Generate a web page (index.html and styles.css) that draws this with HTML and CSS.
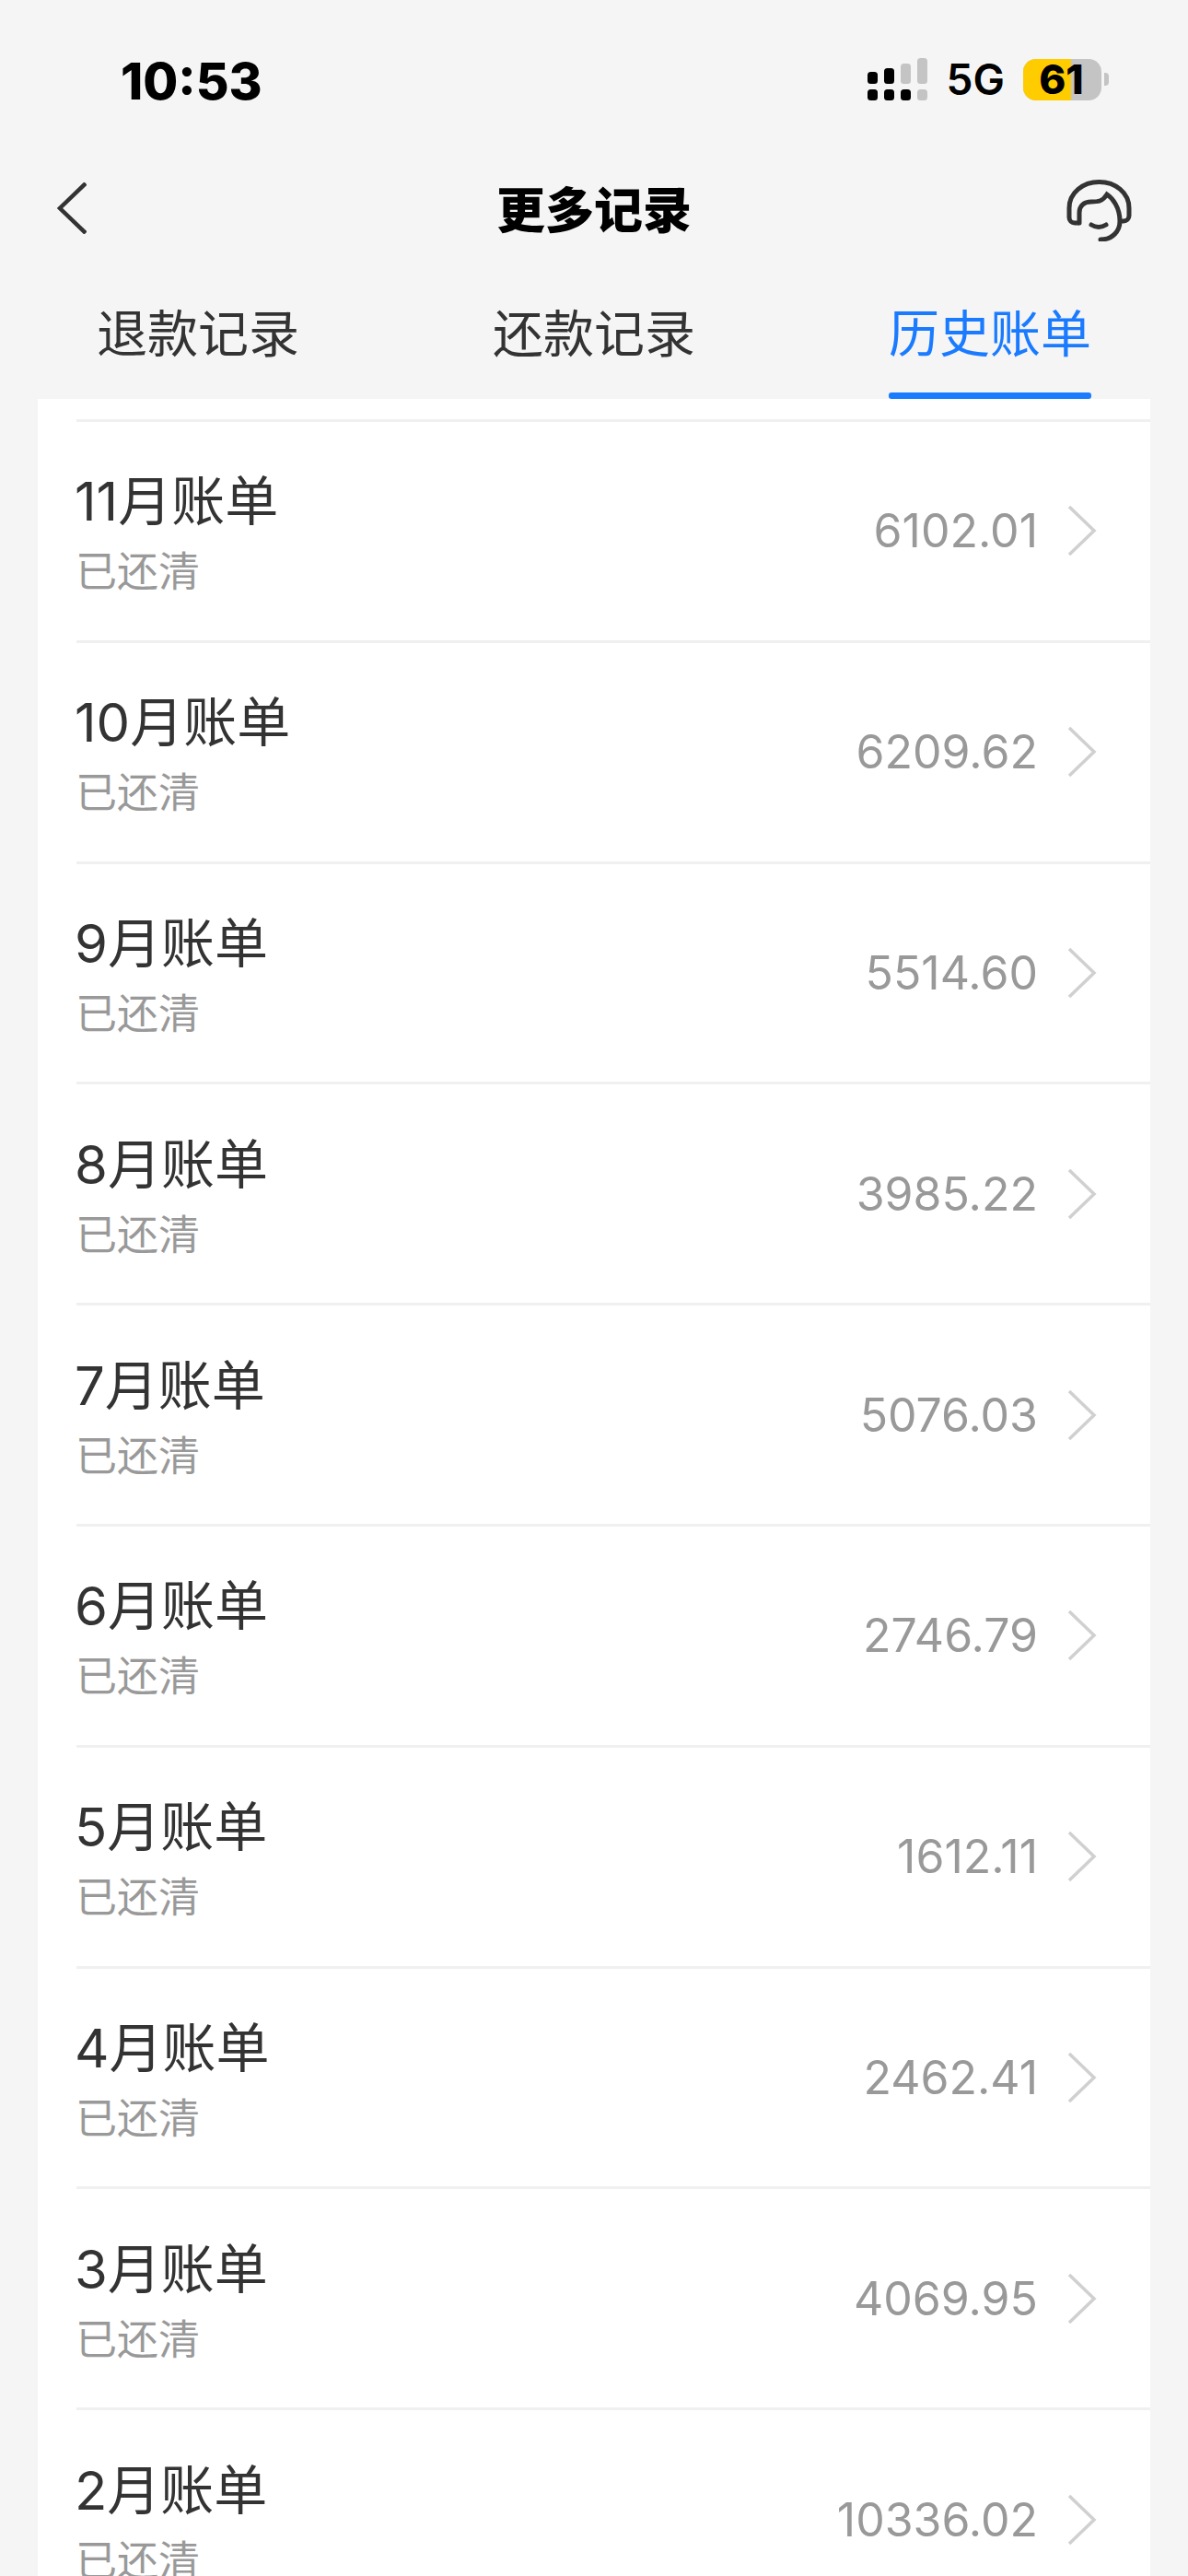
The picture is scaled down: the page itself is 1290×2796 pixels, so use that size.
FILE: index.html
```html
<!DOCTYPE html>
<html lang="zh-CN">
<head>
    <meta charset="UTF-8">
    <meta name="viewport" content="width=device-width, initial-scale=1.0">
    <title>更多记录</title>
    <link rel="stylesheet" href="styles.css">
</head>
<body>

<header class="status">
    <span class="time">10:53</span>
    <div class="status-right">
        <svg class="signal" width="65" height="46" viewBox="0 0 65 46">
            <rect x="0" y="15" width="11" height="13" rx="3.5" fill="#000"/>
            <rect x="18" y="11" width="11" height="17" rx="3.5" fill="#000"/>
            <rect x="36" y="6" width="11" height="22" rx="3.5" fill="#c4c4c4"/>
            <rect x="54" y="0" width="11" height="28" rx="3.5" fill="#c4c4c4"/>
            <rect x="0" y="34" width="11" height="12" rx="3.5" fill="#000"/>
            <rect x="18" y="34" width="11" height="12" rx="3.5" fill="#000"/>
            <rect x="36" y="34" width="11" height="12" rx="3.5" fill="#000"/>
            <rect x="54" y="34" width="11" height="12" rx="3.5" fill="#c4c4c4"/>
        </svg>
        <span class="net">5G</span>
        <div class="battery">
            <div class="battery-body"><div class="battery-fill"></div><span class="battery-num">61</span></div>
            <div class="battery-nub"></div>
        </div>
    </div>
</header>

<nav class="topbar">
    <svg class="back" width="32" height="56" viewBox="0 0 32 56">
        <path d="M31 1 L3 28 L31 55" fill="none" stroke="#333" stroke-width="4.5"/>
    </svg>
    <h1 class="page-title">更多记录</h1>
    <svg class="service" width="72" height="67" viewBox="0 0 72 67">
        <path d="M14 47 H9 a6 6 0 0 1 -6 -6 V31 C3 14 18 2.500 35.500 2.500 S68 14 68 31 V39 a6 6 0 0 1 -6 6 H58" fill="none" stroke="#333" stroke-width="5"/>
        <path d="M14 47 V36 C14 28 19 24 27 24 C34 24 39 24 44 16 C50 20 58 30 58 45 C58 56 50 65 37 65" fill="none" stroke="#333" stroke-width="5" stroke-linecap="round"/>
        <path d="M27 49 Q35 54 43 49" fill="none" stroke="#333" stroke-width="5" stroke-linecap="round"/>
    </svg>
</nav>

<div class="tabs">
    <div class="tab">退款记录</div>
    <div class="tab">还款记录</div>
    <div class="tab active">历史账单</div>
</div>

<main class="panel">
    <ul class="bills">
        <li class="bill">
            <div class="bill-info"><div class="bill-name">11月账单</div><div class="bill-state">已还清</div></div>
            <span class="bill-amount">6102.01</span>
            <svg class="chev" width="32" height="54" viewBox="0 0 32 54"><path d="M2 1 L29 27 L2 53" fill="none" stroke="#d0d0d0" stroke-width="3.500"/></svg>
        </li>
        <li class="bill">
            <div class="bill-info"><div class="bill-name">10月账单</div><div class="bill-state">已还清</div></div>
            <span class="bill-amount">6209.62</span>
            <svg class="chev" width="32" height="54" viewBox="0 0 32 54"><path d="M2 1 L29 27 L2 53" fill="none" stroke="#d0d0d0" stroke-width="3.500"/></svg>
        </li>
        <li class="bill">
            <div class="bill-info"><div class="bill-name">9月账单</div><div class="bill-state">已还清</div></div>
            <span class="bill-amount">5514.60</span>
            <svg class="chev" width="32" height="54" viewBox="0 0 32 54"><path d="M2 1 L29 27 L2 53" fill="none" stroke="#d0d0d0" stroke-width="3.500"/></svg>
        </li>
        <li class="bill">
            <div class="bill-info"><div class="bill-name">8月账单</div><div class="bill-state">已还清</div></div>
            <span class="bill-amount">3985.22</span>
            <svg class="chev" width="32" height="54" viewBox="0 0 32 54"><path d="M2 1 L29 27 L2 53" fill="none" stroke="#d0d0d0" stroke-width="3.500"/></svg>
        </li>
        <li class="bill">
            <div class="bill-info"><div class="bill-name">7月账单</div><div class="bill-state">已还清</div></div>
            <span class="bill-amount">5076.03</span>
            <svg class="chev" width="32" height="54" viewBox="0 0 32 54"><path d="M2 1 L29 27 L2 53" fill="none" stroke="#d0d0d0" stroke-width="3.500"/></svg>
        </li>
        <li class="bill">
            <div class="bill-info"><div class="bill-name">6月账单</div><div class="bill-state">已还清</div></div>
            <span class="bill-amount">2746.79</span>
            <svg class="chev" width="32" height="54" viewBox="0 0 32 54"><path d="M2 1 L29 27 L2 53" fill="none" stroke="#d0d0d0" stroke-width="3.500"/></svg>
        </li>
        <li class="bill">
            <div class="bill-info"><div class="bill-name">5月账单</div><div class="bill-state">已还清</div></div>
            <span class="bill-amount">1612.11</span>
            <svg class="chev" width="32" height="54" viewBox="0 0 32 54"><path d="M2 1 L29 27 L2 53" fill="none" stroke="#d0d0d0" stroke-width="3.500"/></svg>
        </li>
        <li class="bill">
            <div class="bill-info"><div class="bill-name">4月账单</div><div class="bill-state">已还清</div></div>
            <span class="bill-amount">2462.41</span>
            <svg class="chev" width="32" height="54" viewBox="0 0 32 54"><path d="M2 1 L29 27 L2 53" fill="none" stroke="#d0d0d0" stroke-width="3.500"/></svg>
        </li>
        <li class="bill">
            <div class="bill-info"><div class="bill-name">3月账单</div><div class="bill-state">已还清</div></div>
            <span class="bill-amount">4069.95</span>
            <svg class="chev" width="32" height="54" viewBox="0 0 32 54"><path d="M2 1 L29 27 L2 53" fill="none" stroke="#d0d0d0" stroke-width="3.500"/></svg>
        </li>
        <li class="bill">
            <div class="bill-info"><div class="bill-name">2月账单</div><div class="bill-state">已还清</div></div>
            <span class="bill-amount">10336.02</span>
            <svg class="chev" width="32" height="54" viewBox="0 0 32 54"><path d="M2 1 L29 27 L2 53" fill="none" stroke="#d0d0d0" stroke-width="3.500"/></svg>
        </li>
    </ul>
</main>

</body>
</html>
```

FILE: styles.css
```css
html, body {
    height: 2796px;
    overflow: hidden;
}
body {
    margin: 0;
    background-color: #f5f5f5;
    color: #333;
    font-family: Inter, "Noto Sans CJK SC", sans-serif;
}

/* status bar */
.status {
    height: 172px;
    box-sizing: border-box;
    padding: 56px 86px 0 131px;
    display: flex;
    justify-content: space-between;
    align-items: flex-start;
}
.time {
    font-size: 55px;
    font-weight: 800;
    line-height: 64px;
    color: #000;
}
.status-right {
    display: flex;
    align-items: center;
    margin-top: 7px;
}
.signal {
    display: block;
}
.net {
    margin-left: 21px;
    font-size: 46px;
    font-weight: 600;
    line-height: 46px;
    color: #000;
}
.battery {
    margin-left: 20px;
    display: flex;
    align-items: center;
}
.battery-body {
    position: relative;
    width: 85px;
    height: 45px;
    border-radius: 14px;
    background-color: #c4c4c4;
    overflow: hidden;
    display: flex;
    justify-content: center;
    align-items: center;
}
.battery-fill {
    position: absolute;
    left: 0;
    top: 0;
    bottom: 0;
    width: 52px;
    background-color: #fc0;
}
.battery-num {
    position: relative;
    margin-right: 2px;
    font-size: 44px;
    font-weight: 800;
    color: #000;
}
.battery-nub {
    margin-left: 3px;
    width: 5px;
    height: 14px;
    border-radius: 0 4px 4px 0;
    background-color: #c4c4c4;
}

/* title bar */
.topbar {
    height: 112px;
    box-sizing: border-box;
    padding: 0 60px;
    display: grid;
    grid-template-columns: 1fr auto 1fr;
    align-items: center;
}
.back {
    margin: 0 0 4px 2px;
}
.service {
    justify-self: end;
}
.page-title {
    margin: 0 0 6px;
    font-size: 53px;
    font-weight: 900;
    color: #000;
}

/* tabs */
.tabs {
    height: 149px;
    display: flex;
}
.tab {
    flex: 1;
    text-align: center;
    font-size: 55px;
    line-height: 76px;
    padding-top: 40px;
}
.tab.active {
    color: #1a7bff;
    position: relative;
}
.tab.active::after {
    content: "";
    position: absolute;
    left: 105px;
    right: 105px;
    bottom: 0;
    height: 7px;
    border-radius: 3px;
    background-color: #1a7bff;
}

/* list */
.panel {
    margin: 0 41px;
    padding-top: 22px;
    background-color: #fff;
}
.bills {
    list-style: none;
    margin: 0 0 0 42px;
    padding: 0;
    border-top: 3px solid #f0f0f0;
}
.bill {
    height: 236.8px;
    padding-right: 58px;
    border-bottom: 3px solid #f0f0f0;
    display: flex;
    align-items: center;
}
.bill-info {
    flex: 1;
    padding-top: 5px;
}
.bill-name {
    margin-left: -2px;
    font-size: 58px;
    line-height: 72px;
}
.bill-state {
    margin-left: -1px;
    margin-top: 13px;
    font-size: 45px;
    line-height: 56px;
    color: #999;
}
.bill-amount {
    font-size: 50px;
    color: #999;
}
.chev {
    margin-left: 32px;
}
```
